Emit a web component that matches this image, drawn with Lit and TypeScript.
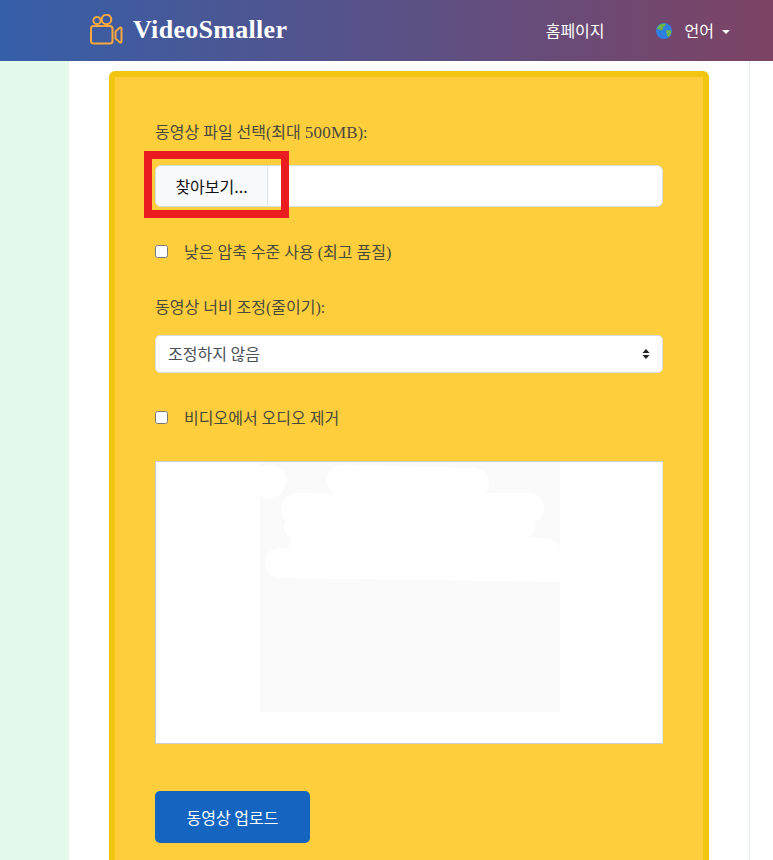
import { LitElement, html, css } from "lit";
import { customElement } from "lit/decorators.js";

@customElement("app-root")
export class AppRoot extends LitElement {
  static styles = css`
    :host { display: block; height: 860px; overflow: hidden; background: #fff;
      font-family: "Liberation Serif", "Noto Sans CJK KR", serif; color: #4a4a3c; }
    * { box-sizing: border-box; }
    .nav { height: 61px; display: flex; align-items: center; padding: 0 43px 0 90px;
      background: linear-gradient(90deg, #355fa9 0%, #7d4364 100%); color: #fff; }
    .logo { width: 33px; height: 33px; flex: none; margin-right: 10px; }
    .brand { font-size: 26px; letter-spacing: 0.3px; font-weight: 700; flex: 1; padding-bottom: 1px; }
    .link { font-family: "Noto Sans CJK KR", "Noto Sans", sans-serif; font-size: 16px; display: flex; align-items: center; padding-bottom: 2px; }
    .home { margin-right: 51px; }
    .globe { width: 16px; height: 16px; margin-right: 13px; margin-top: 2px; }
    .caret { width: 0; height: 0; margin-left: 8px; margin-top: 5px; border-style: solid; border-width: 4px 4px 0; border-color: #fff transparent transparent; }
    .page { display: flex; background: #e2f9ec; }
    .container { width: 681px; margin-left: 69px; background: #fff; border-right: 1px solid #e4ecee; padding: 10px 40px 0; }
    .wrap { background: #fff; flex: 1; }
    .card { position: relative; width: 600px; background: #ffce3c; border: 6px solid #f2c511; border-radius: 6px; padding: 44px 40px 60px; }
    .label { font-size: 16px; line-height: 24px; height: 24px; display: block; }
    .num { font-size: 17px; letter-spacing: 0.2px; }
    .file { margin-top: 20px; height: 42px; background: #fff; border: 1px solid #d9dde2; border-radius: 6px; display: flex; overflow: hidden; }
    .browse { width: 112px; background: #f8f9fa; border-right: 1px solid #dee2e6; color: #111; font: 16px/40px "Noto Sans CJK KR", "Noto Sans", sans-serif; text-align: center; }
    .check { display: flex; align-items: center; height: 24px; font-size: 16px; }
    .check input { width: 13px; height: 13px; margin: 0 16px 0 0; }
    .c1 { margin-top: 32px; }
    .l2 { margin-top: 33px; }
    .select-wrap { position: relative; margin-top: 15px; }
    select { display: block; width: 100%; height: 38px; appearance: none; background: #fff; border: 1px solid #d9dde2; border-radius: 5px; padding: 0 12px 2px;
      font: 16px "Noto Sans CJK KR", "Noto Sans", sans-serif; color: #495057; }
    .arrows { position: absolute; right: 13px; top: 14px; width: 8px; height: 10px; pointer-events: none; }
    .c2 { margin-top: 32px; }
    .frame { margin-top: 32px; height: 283px; background: #fff; border-top: 1px solid #c9ccd2; border-left: 1px solid #c9ccd2; border-bottom: 1px solid #c9ccd2; border-right: 1px solid #e6e6e6; }
    .ad { width: 300px; height: 250px; margin-left: 104px; display: block; }
    .upload { display: block; margin-top: 47px; width: 155px; height: 52px; background: #1565c0; color: #fff; border: 0; border-radius: 5px; font: 16px "Noto Sans CJK KR", "Noto Sans", sans-serif; }
    .mark { position: absolute; left: 29px; top: 74px; width: 145px; height: 67px; border: 8px solid #ea1c1f; pointer-events: none; }
  `;

  render() {
    return html`
      <header class="nav">
        <svg class="logo" viewBox="0 0 33 33" fill="none" stroke="#fba83e" stroke-width="2" stroke-linejoin="round">
          <circle cx="7" cy="6.5" r="3.6"></circle>
          <circle cx="16.5" cy="5.5" r="4.8"></circle>
          <rect x="1" y="12" width="21.5" height="17.5" rx="2.5"></rect>
          <path d="M25.5 17.5 L30 13.5 Q31.5 13 31.5 15 V27 Q31.5 29 30 28.5 L25.5 24.5 Z"></path>
        </svg>
        <span class="brand">VideoSmaller</span>
        <span class="link home">홈페이지</span>
        <span class="link">
          <svg class="globe" viewBox="0 0 16 16">
            <circle cx="8" cy="8" r="8" fill="#2f7fe0"></circle>
            <path d="M4 1.5 C6 .5 9 .5 10 1 L9 3 L7.5 3.5 L7 6 L5 7.5 L2.5 6 L1 6.5 C1.2 4.5 2.5 2.5 4 1.5 Z" fill="#6fb54a"></path>
            <path d="M10 7.5 L14 7 L15.5 8.5 C15.3 10.5 14 13 12.5 14 L11 12.5 L10.5 10 Z" fill="#6fb54a"></path>
          </svg>
          언어
          <span class="caret"></span>
        </span>
      </header>
      <div class="page">
        <main class="container">
          <form class="card">
            <label class="label">동영상 파일 선택(최대 <span class="num">500MB</span>):</label>
            <div class="file"><div class="browse">찾아보기...</div></div>
            <label class="check c1"><input type="checkbox" />낮은 압축 수준 사용 (최고 품질)</label>
            <label class="label l2">동영상 너비 조정(줄이기):</label>
            <div class="select-wrap">
              <select><option>조정하지 않음</option></select>
              <svg class="arrows" viewBox="0 0 8 10" fill="#222"><path d="M4 0 L7.5 4 H.5 Z M4 10 L.5 6 H7.5 Z"></path></svg>
            </div>
            <label class="check c2"><input type="checkbox" />비디오에서 오디오 제거</label>
            <div class="frame">
              <svg class="ad" viewBox="0 0 300 250">
                <rect width="300" height="250" fill="#fafafa"></rect>
                <g fill="#fff">
                  <path d="M0 6 Q5 3 10 3 C20 3 28 10 27 18 C26 28 18 37 10 37 Q4 37 0 33 Z"></path>
                  <path d="M82 3 L215 6 C224 7 229 14 229 21 C229 25 228 28 226 31 L270 31 C278 31 284 38 284 46 C284 54 280 58 274 60 C277 66 274 72 267 76 L287 76 C294 77 300 82 300 86 V120 L20 116 C11 116 5 110 5 101 C5 92 12 86 20 86 L29 86 L30 76 C26 72 24 70 24 65 C24 62 25 60 26 58 C23 55 21 50 21 46 C21 38 28 32 36 31 L76 32 C70 29 67 23 67 18 C67 9 74 3 82 3 Z"></path>
                </g>
              </svg>
            </div>
            <button class="upload" type="button">동영상 업로드</button>
            <div class="mark"></div>
          </form>
        </main>
        <div class="wrap"></div>
      </div>
    `;
  }
}
